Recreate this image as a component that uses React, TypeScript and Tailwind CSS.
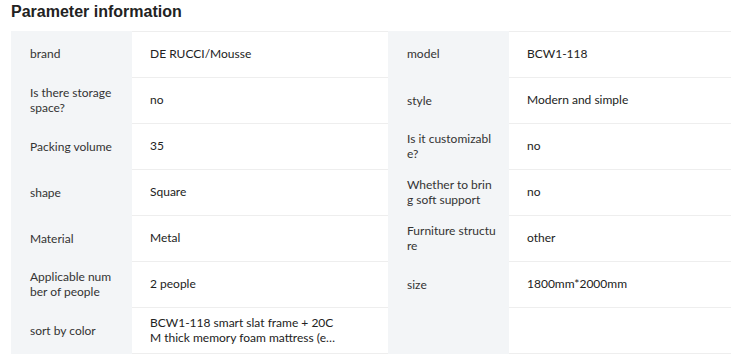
import React from 'react';

type Param = { label: string[]; value: string[] };

const rows: [Param, Param | null][] = [
  [
    { label: ['brand'], value: ['DE RUCCI/Mousse'] },
    { label: ['model'], value: ['BCW1-118'] },
  ],
  [
    { label: ['Is there storage', 'space?'], value: ['no'] },
    { label: ['style'], value: ['Modern and simple'] },
  ],
  [
    { label: ['Packing volume'], value: ['35'] },
    { label: ['Is it customizabl', 'e?'], value: ['no'] },
  ],
  [
    { label: ['shape'], value: ['Square'] },
    { label: ['Whether to brin', 'g soft support'], value: ['no'] },
  ],
  [
    { label: ['Material'], value: ['Metal'] },
    { label: ['Furniture structu', 're'], value: ['other'] },
  ],
  [
    { label: ['Applicable num', 'ber of people'], value: ['2 people'] },
    { label: ['size'], value: ['1800mm*2000mm'] },
  ],
  [
    {
      label: ['sort by color'],
      value: ['BCW1-118 smart slat frame + 20C', 'M thick memory foam mattress (economy version)'],
    },
    null,
  ],
];

const Cell = ({ param, first }: { param: Param | null; first: boolean }) => (
  <>
    <div className="w-[121px] shrink-0 bg-[#f3f5f7] pl-[19px] pb-[2px] flex flex-col justify-center leading-[15px] text-[#333]">
      {param?.label.map((l) => (
        <span key={l} className="whitespace-nowrap">
          {l}
        </span>
      ))}
    </div>
    <div
      className={`w-[256px] shrink-0 border-b border-[#eeeeee] pl-[18px] pb-[2px] flex flex-col justify-center leading-[15px] text-[#222] ${
        first ? 'border-t' : ''
      }`}
    >
      {param?.value.map((v, i) =>
        i === 0 ? (
          <span key={v} className="whitespace-nowrap">
            {v}
          </span>
        ) : (
          <span key={v} className="w-[188px] whitespace-nowrap overflow-hidden text-ellipsis">
            {v}
          </span>
        )
      )}
    </div>
  </>
);

export default function App() {
  return (
    <div
      className="w-[731px] h-[363px] overflow-hidden bg-white text-[12px]"
      style={{ fontFamily: 'Lato, "Noto Sans CJK SC", sans-serif' }}
    >
      <h2
        className="px-[11px] pt-[1px] h-[31px] text-[16px] leading-[22px] font-bold text-[#222]"
        style={{ fontFamily: '"Liberation Sans", Arial, sans-serif' }}
      >
        Parameter information
      </h2>
      <div className="ml-[11px] w-[754px]">
        {rows.map(([a, b], i) => (
          <div key={i} className={`flex ${i === 0 ? 'h-[47px]' : 'h-[46px]'}`}>
            <Cell param={a} first={i === 0} />
            <Cell param={b} first={i === 0} />
          </div>
        ))}
      </div>
    </div>
  );
}
